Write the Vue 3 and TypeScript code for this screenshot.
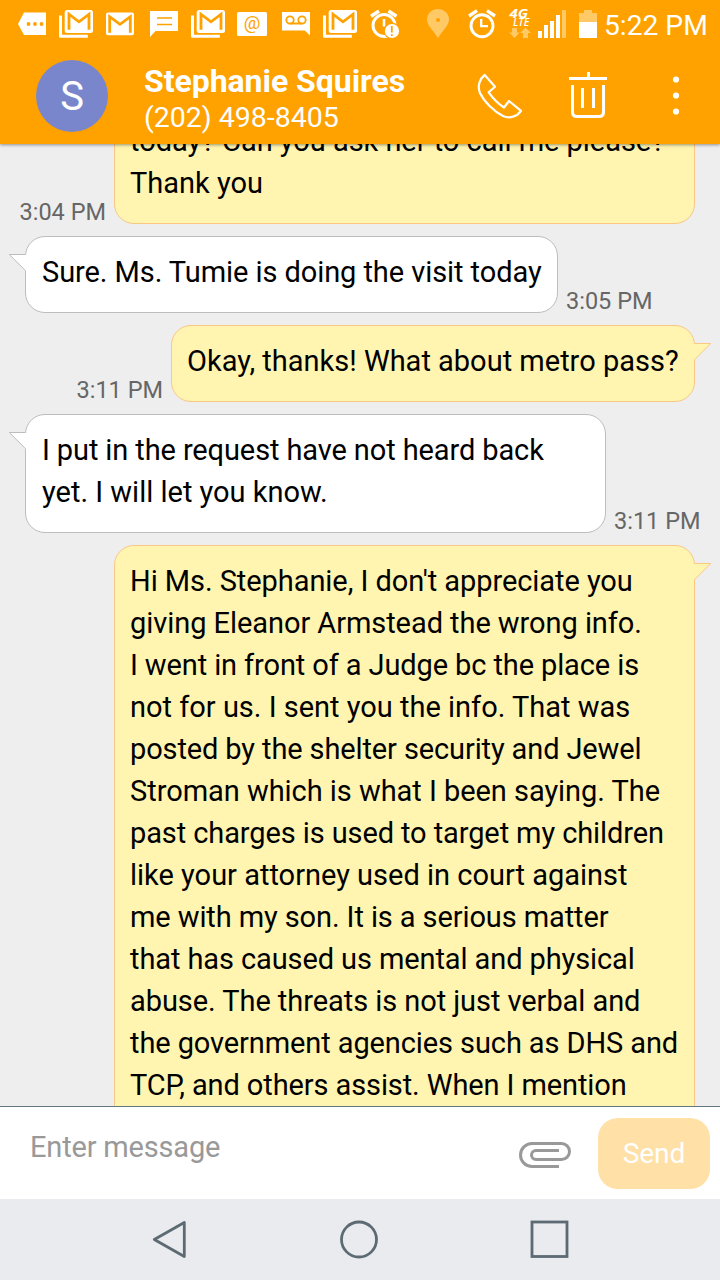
<script setup lang="ts">
interface Line {
  text: string
  tracking: number
}
interface Message {
  side: 'in' | 'out'
  time: string
  width: number
  lines: Line[]
}

const line = (text: string, tracking = 0): Line => ({ text, tracking })

const messages: Message[] = [
  {
    side: 'out',
    time: '3:04 PM',
    width: 581,
    lines: [line('today? Can you ask her to call me please?', -0.03), line('Thank you')],
  },
  { side: 'in', time: '3:05 PM', width: 533, lines: [line('Sure. Ms. Tumie is doing the visit today', -0.07)] },
  { side: 'out', time: '3:11 PM', width: 524, lines: [line('Okay, thanks! What about metro pass?')] },
  {
    side: 'in',
    time: '3:11 PM',
    width: 581,
    lines: [line('I put in the request have not heard back', -0.11), line('yet. I will let you know.')],
  },
  {
    side: 'out',
    time: '',
    width: 581,
    lines: [
      line("Hi Ms. Stephanie, I don't appreciate you", -0.06),
      line('giving Eleanor Armstead the wrong info.', -0.06),
      line('I went in front of a Judge bc the place is', -0.11),
      line('not for us. I sent you the info. That was'),
      line('posted by the shelter security and Jewel', -0.12),
      line('Stroman which is what I been saying. The', -0.04),
      line('past charges is used to target my children', -0.1),
      line('like your attorney used in court against'),
      line('me with my son. It is a serious matter', -0.1),
      line('that has caused us mental and physical', -0.1),
      line('abuse. The threats is not just verbal and', -0.06),
      line('the government agencies such as DHS and', -0.1),
      line('TCP, and others assist. When I mention', -0.1),
    ],
  },
]

// Each status cell shares one 48px-high coordinate strip.
type Kind = 'more' | 'mails' | 'mail' | 'chat' | 'at' | 'voicemail' | 'alarmAlert' | 'pin' | 'alarm' | 'network' | 'signal' | 'battery'
const cells: { kind: Kind; x: number; w: number }[] = [
  { kind: 'more', x: 0, w: 52 },
  { kind: 'mails', x: 52, w: 48 },
  { kind: 'mail', x: 100, w: 42 },
  { kind: 'chat', x: 142, w: 42 },
  { kind: 'mails', x: 52, w: 48 },
  { kind: 'at', x: 232, w: 42 },
  { kind: 'voicemail', x: 274, w: 42 },
  { kind: 'mails', x: 52, w: 48 },
  { kind: 'alarmAlert', x: 364, w: 49 },
  { kind: 'pin', x: 413, w: 45 },
  { kind: 'alarm', x: 458, w: 44 },
  { kind: 'network', x: 502, w: 33 },
  { kind: 'signal', x: 535, w: 37 },
  { kind: 'battery', x: 572, w: 30 },
]
</script>

<template>
  <div class="screen">
    <header class="top">
      <div class="status">
        <svg v-for="(c, i) in cells" :key="i" :width="c.w" height="48" :viewBox="`${c.x} 0 ${c.w} 48`" fill="none">
          <template v-if="c.kind === 'more'">
            <path d="M18 24L24 12.5H46V35H24Z" fill="#fff" />
            <g fill="#ffa200"><circle cx="28.5" cy="24" r="1.9" /><circle cx="35" cy="24" r="1.9" /><circle cx="41.5" cy="24" r="1.9" /></g>
          </template>
          <template v-else-if="c.kind === 'mails'">
            <path d="M60.5 15.5V36.3H87.8" stroke="#fff" stroke-width="3" stroke-linejoin="round" />
            <rect x="64.7" y="10" width="28.3" height="23" rx="2.5" fill="#fff" />
            <path d="M69 29.7V14.2L79 21.8L89 14.2V29.7" stroke="#ffa200" stroke-width="2.8" />
          </template>
          <template v-else-if="c.kind === 'mail'">
            <rect x="106" y="12.5" width="28" height="22.7" rx="2" fill="#fff" />
            <path d="M109.7 32.8V16.7L120 24.3L130.3 16.7V32.8" stroke="#ffa200" stroke-width="2.8" />
          </template>
          <template v-else-if="c.kind === 'chat'">
            <path d="M150 11H178V31H155.5L150 37Z" fill="#fff" />
            <path d="M157 18H172M157 24.4H172" stroke="#ffa200" stroke-width="1.5" />
          </template>
          <template v-else-if="c.kind === 'at'">
            <rect x="237" y="12" width="30" height="24" rx="1.5" fill="#fff" />
            <text x="252" y="29" class="at">@</text>
          </template>
          <template v-else-if="c.kind === 'voicemail'">
            <path d="M282 12H310V35.5L304.8 30.5H282Z" fill="#fff" />
            <path d="M290 23.5H302" stroke="#ffa200" stroke-width="2" />
            <circle cx="290" cy="20" r="3.7" stroke="#ffa200" stroke-width="1.8" />
            <circle cx="302" cy="20" r="3.7" stroke="#ffa200" stroke-width="1.8" />
          </template>
          <template v-else-if="c.kind === 'alarmAlert'">
            <path d="M371 16.2L379 11M388.5 11L396.500 16.2" stroke="#fff" stroke-width="3.4" />
            <circle cx="384" cy="25.500" r="11" stroke="#fff" stroke-width="3" />
            <path d="M384 19V26.500" stroke="#fff" stroke-width="2.500" />
            <circle cx="392" cy="31" r="8.300" fill="#ffa200" />
            <circle cx="392" cy="31" r="7.100" fill="#fff" />
            <path d="M391.800 26V32.500M391.800 34.200V36" stroke="#ffa200" stroke-width="1.800" />
          </template>
          <template v-else-if="c.kind === 'pin'">
            <path d="M438 38C433 30 427 25.500 427 19.500A11 10.500 0 0 1 449 19.500C449 25.500 443 30 438 38Z" fill="#ffc966" />
            <circle cx="438" cy="20" r="2.1" fill="#ffa200" />
          </template>
          <template v-else-if="c.kind === 'alarm'">
            <path d="M469 16L477 10.7M487 10.700L495 16" stroke="#fff" stroke-width="3.300" />
            <circle cx="482" cy="25.700" r="11" stroke="#fff" stroke-width="2.900" />
            <path d="M481.200 19V26.200H488" stroke="#fff" stroke-width="2.300" />
          </template>
          <template v-else-if="c.kind === 'network'">
            <text x="509.500" y="17.800" class="g4" textLength="18.500" lengthAdjust="spacingAndGlyphs">4G</text>
            <text x="513" y="26.200" class="lte" textLength="16.500" lengthAdjust="spacingAndGlyphs">LTE</text>
            <path d="M512 28H517V32.500H519.500L514.500 38L509.200 32.500H512ZM523 38V33H520.200L525.500 27.500L531 33H528V38Z" fill="#ffc966" />
          </template>
          <template v-else-if="c.kind === 'signal'">
            <path d="M538 31H542V38H538ZM544 25H548V38H544ZM550 21H554V38H550ZM556 15H560V38H556Z" fill="#fff" />
            <path d="M562 10H566V38H562Z" fill="#ffc966" />
          </template>
          <template v-else>
            <path d="M579 13H584V10H592V13H597V22H579Z" fill="#ffc966" />
            <rect x="579" y="22" width="18" height="16" fill="#fff" />
          </template>
        </svg>
        <span class="clock">5:22 PM</span>
      </div>
      <div class="bar">
        <div class="avatar">S</div>
        <div class="who">
          <div class="name">Stephanie Squires</div>
          <div class="number">(202) 498-8405</div>
        </div>
        <svg class="actions" width="250" height="96" viewBox="470 48 250 96" fill="none" stroke="#fff">
          <path d="M484.700 75L495 86.700L488.700 92.300C493 98.500 498 103.500 504 107.500L509 101L521 110.800C517 116.500 510 119 503 116C494 111.500 484 101.500 480 93C477 86 480 78.500 484.700 75Z" stroke-width="2.200" stroke-linejoin="round" />
          <path d="M569 78.500H607M588.500 72V78" stroke-width="3" />
          <path d="M572.500 85V112Q572.500 116.500 577 116.500H599Q603.500 116.500 603.500 112V85M582.500 88V108M593.500 88V108" stroke-width="3" />
          <g fill="#fff" stroke="none"><circle cx="676" cy="79.500" r="3.100" /><circle cx="676" cy="95.500" r="3.100" /><circle cx="676" cy="111.500" r="3.100" /></g>
        </svg>
      </div>
    </header>

    <main class="chat">
      <div class="list">
        <div v-for="(m, i) in messages" :key="i" class="row" :class="m.side">
          <div class="bubble" :style="{ width: m.width + 'px' }">
            <svg v-if="m.side === 'in'" class="tail" width="18" height="20" viewBox="0 0 18 20">
              <path d="M18 1.500H1.300L17.500 17.700H18Z" fill="#fff" />
              <path d="M17.500 1.500H1.300L17.500 17.700" fill="none" stroke="#bdbdbd" />
            </svg>
            <svg v-else class="tail" width="18" height="20" viewBox="0 0 18 20">
              <path d="M0 1.500H16.700L0.500 17.700H0Z" fill="#fff5b0" />
              <path d="M0.500 1.500H16.700L0.500 17.700" fill="none" stroke="#fac784" />
            </svg>
            <div v-for="l in m.lines" :key="l.text" class="line" :style="{ letterSpacing: l.tracking + 'px' }">{{ l.text }}</div>
          </div>
          <time v-if="m.time" class="time">{{ m.time }}</time>
        </div>
      </div>
    </main>

    <section class="composer">
      <span class="hint">Enter message</span>
      <svg class="clip" width="54" height="28" viewBox="518 1141 54 28" fill="none" stroke="#999" stroke-width="3">
        <path d="M559 1166.500H532A11.500 11.500 0 0 1 532 1143.500H561.500A8 8 0 0 1 561.500 1159.500H536A4.500 4.500 0 0 1 536 1150.500H559" />
      </svg>
      <button class="send">Send</button>
    </section>

    <nav class="nav">
      <svg width="720" height="81" viewBox="0 1199 720 81" fill="none" stroke="#5c6a73" stroke-width="2.800">
        <path d="M154.300 1239.500L184.300 1222.500V1256.500Z" stroke-linejoin="round" />
        <circle cx="359" cy="1239.500" r="17.500" />
        <rect x="532" y="1222" width="35" height="34.500" />
      </svg>
    </nav>
  </div>
</template>

<style>
body {
  margin: 0;
}
</style>

<style scoped>
.screen {
  width: 720px;
  height: 1280px;
  display: flex;
  flex-direction: column;
  overflow: hidden;
  background: #eee;
  font-family: Roboto, sans-serif;
}
svg {
  display: block;
  flex: none;
}
.top {
  position: relative;
  z-index: 1;
  height: 144px;
  flex: none;
  background: #ffa200;
  color: #fff;
  box-shadow: 0 1px 3px rgba(0, 0, 0, 0.4);
}
.status {
  display: flex;
  height: 48px;
}
.clock {
  margin-left: 2px;
  font-size: 28.2px;
  line-height: 51px;
  white-space: nowrap;
}
.at {
  fill: #ffa200;
  font: 18.5px Roboto, sans-serif;
  text-anchor: middle;
}
.g4,
.lte {
  fill: #fff;
  font: italic bold 13px 'Open Sans', sans-serif;
}
.lte {
  font-size: 9.8px;
  font-weight: 600;
}
.bar {
  display: flex;
  height: 96px;
}
.avatar {
  width: 72px;
  height: 72px;
  margin: 12px 36px 0;
  border-radius: 50%;
  background: #7986cb;
  font-size: 40px;
  line-height: 74px;
  text-align: center;
}
.who {
  flex: 1;
  padding-top: 15px;
  white-space: nowrap;
}
.name {
  font-size: 32px;
  font-weight: 700;
  line-height: 36px;
  letter-spacing: -0.04px;
}
.number {
  font-size: 28.5px;
  line-height: 37px;
}
.chat {
  flex: 1;
  min-height: 0;
  overflow: hidden;
  display: flex;
  flex-direction: column;
}
.list {
  display: flex;
  flex-direction: column;
  gap: 12px;
  margin-top: -39px;
}
.row {
  display: flex;
  align-items: flex-end;
  gap: 8px;
  padding: 0 25px;
}
.row.out {
  flex-direction: row-reverse;
}
.bubble {
  position: relative;
  box-sizing: border-box;
  flex: none;
  padding: 14px 0 19px 16px;
  border: 1px solid #bdbdbd;
  border-radius: 20px;
  background: #fff;
  white-space: nowrap;
}
.out .bubble {
  padding-left: 15px;
  border-color: #fac784;
  background: #fff5b0;
}
.line {
  height: 42px;
  font-size: 29px;
  line-height: 42px;
  color: #000;
}
.tail {
  position: absolute;
  top: 16px;
  left: -18px;
}
.out .tail {
  left: auto;
  right: -18px;
}
.time {
  color: #666;
  font-size: 23.5px;
  line-height: 24px;
  white-space: nowrap;
}
.composer {
  display: flex;
  height: 92px;
  flex: none;
  border-top: 1px solid #607680;
  background: #fff;
}
.hint {
  width: 488px;
  padding-left: 30px;
  color: #999;
  font-size: 29px;
  line-height: 80px;
  letter-spacing: -0.18px;
}
.clip {
  margin-top: 34px;
}
.send {
  width: 112px;
  height: 71px;
  margin: 11px 0 0 26px;
  padding: 0;
  border: 0;
  border-radius: 20px;
  background: #ffe0a6;
  color: #fff;
  font: 28px Roboto, sans-serif;
}
.nav {
  height: 81px;
  flex: none;
  background: #e9ebee;
}
</style>
